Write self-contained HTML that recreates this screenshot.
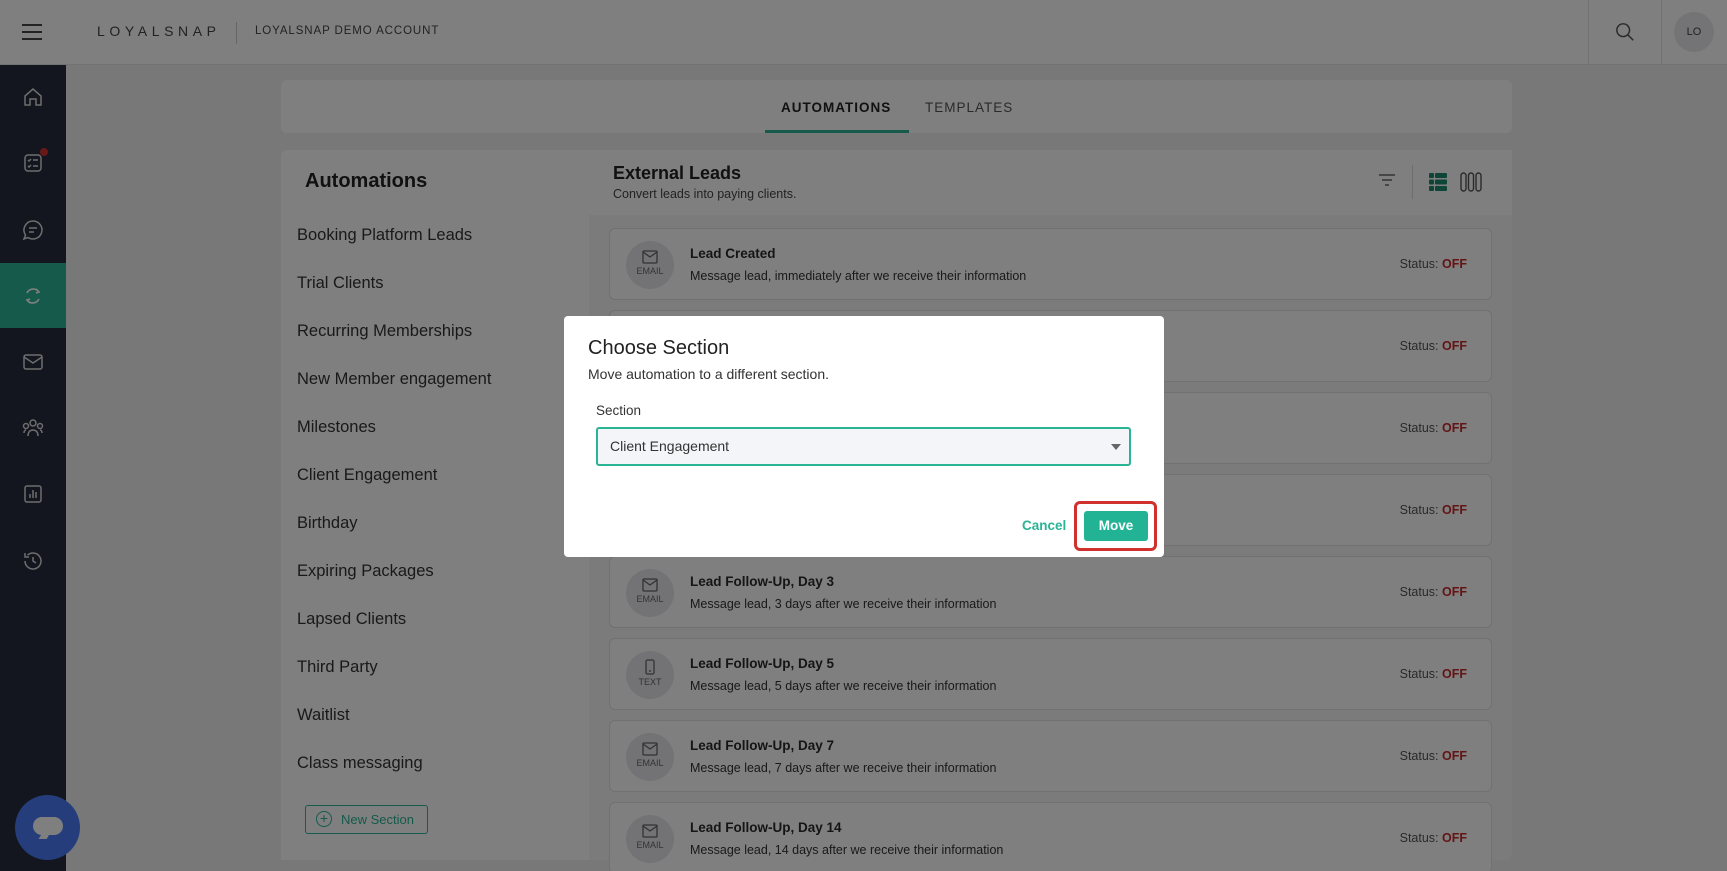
<!DOCTYPE html>
<html><head><meta charset="utf-8"><style>
*{box-sizing:border-box;margin:0;padding:0}
html,body{width:1727px;height:871px;overflow:hidden}
body{background:#f0f0f2;font-family:"Liberation Sans",sans-serif;color:#222;position:relative}
.abs{position:absolute}
.hdr{left:0;top:0;width:1727px;height:65px;background:#fff;border-bottom:1px solid #e4e4e8}
.side{left:0;top:65px;width:66px;height:806px;background:#262a3e}
.ico{position:absolute;left:21px;width:24px;height:24px}
.card{background:#fff;border-radius:6px}
.item{position:absolute;left:297px;font-size:16.5px;color:#333}
.row{position:absolute;left:609px;width:883px;height:72px;background:#fff;border:1px solid #e2e2e6;border-radius:6px}
.circ{position:absolute;left:16px;top:12px;width:48px;height:48px;border-radius:50%;background:#e6e6ea;text-align:center;font-size:9px;color:#666}
.rt{position:absolute;left:80px;top:17px;font-size:13.5px;font-weight:bold;color:#2a2a2a}
.rd{position:absolute;left:80px;top:40px;font-size:12.5px;color:#333}
.st{position:absolute;right:24px;top:28px;font-size:12.5px;color:#555}
.st b{color:#c62828}
.ov{left:0;top:0;width:1727px;height:871px;background:rgba(0,0,0,0.5)}
</style></head><body>
<div class="abs hdr">
 <div class="abs" style="left:22px;top:24px;width:20px;height:2px;background:#444;box-shadow:0 7px 0 #444,0 14px 0 #444"></div>
 <div class="abs" style="left:97px;top:23px;font-size:14px;letter-spacing:4.6px;color:#444">LOYALSNAP</div>
 <div class="abs" style="left:236px;top:22px;width:1px;height:22px;background:#ccc"></div>
 <div class="abs" style="left:255px;top:25px;font-size:11.5px;letter-spacing:0.9px;color:#444">LOYALSNAP DEMO ACCOUNT</div>
 <div class="abs" style="left:1588px;top:0;width:1px;height:65px;background:#e4e4e8"></div>
 <svg class="abs" style="left:1615px;top:22px" width="20" height="20" viewBox="0 0 22 22" fill="none" stroke="#555" stroke-width="1.6"><circle cx="9" cy="9" r="7"/><path d="M14 14l6 6"/></svg>
 <div class="abs" style="left:1661px;top:0;width:1px;height:65px;background:#e4e4e8"></div>
 <div class="abs" style="left:1674px;top:12px;width:40px;height:40px;border-radius:50%;background:#e8e8ec;font-size:11px;color:#444;text-align:center;line-height:40px">LO</div>
</div>
<div class="abs side">
 <div class="abs" style="left:0;top:198px;width:66px;height:65px;background:#2ab496"></div>
 <svg class="ico" style="top:20px" viewBox="0 0 24 24" fill="none" stroke="#ddd" stroke-width="1.5"><path d="M4 11l8-7 8 7v9h-5v-6h-6v6H4z"/></svg>
 <svg class="ico" style="top:86px" viewBox="0 0 24 24" fill="none" stroke="#ddd" stroke-width="1.5"><rect x="4" y="4" width="16" height="16" rx="3"/><path d="M7 9l1 1 2-2M12 9h5M7 15l1 1 2-2M12 15h5"/></svg>
 <div class="abs" style="left:40px;top:83px;width:8px;height:8px;border-radius:50%;background:#d32f2f"></div>
 <svg class="ico" style="top:153px" viewBox="0 0 24 24" fill="none" stroke="#ddd" stroke-width="1.5"><path d="M12 3a9 9 0 1 1-5 16.5L3 21l1.5-4A9 9 0 0 1 12 3z"/><path d="M8 10h8M8 14h5"/></svg>
 <svg class="ico" style="top:219px" viewBox="0 0 24 24" fill="none" stroke="#fff" stroke-width="1.6"><path d="M18 8a7 7 0 0 0-12 1M6 16a7 7 0 0 0 12-1M15 5l3 3-3 1M9 19l-3-3 3-1"/></svg>
 <svg class="ico" style="top:285px" viewBox="0 0 24 24" fill="none" stroke="#ddd" stroke-width="1.5"><rect x="3" y="5" width="18" height="14" rx="2"/><path d="M3 7l9 6 9-6"/></svg>
 <svg class="ico" style="top:351px" viewBox="0 0 24 24" fill="none" stroke="#ddd" stroke-width="1.5"><circle cx="12" cy="7" r="3"/><circle cx="5" cy="10" r="2.5"/><circle cx="19" cy="10" r="2.5"/><path d="M7 20c0-4 2-6 5-6s5 2 5 6M3 17c0-2 1-3 2-3M21 17c0-2-1-3-2-3"/></svg>
 <svg class="ico" style="top:417px" viewBox="0 0 24 24" fill="none" stroke="#ddd" stroke-width="1.5"><rect x="4" y="4" width="16" height="16" rx="2"/><path d="M9 16v-4M12 16V8M15 16v-6"/></svg>
 <svg class="ico" style="top:484px" viewBox="0 0 24 24" fill="none" stroke="#ddd" stroke-width="1.5"><path d="M4 12a8 8 0 1 0 2.5-5.8M4 4v4h4"/><path d="M12 8v4l3 2"/></svg>
</div>
<div class="abs card" style="left:281px;top:80px;width:1231px;height:53px">
 <div class="abs" style="left:500px;top:20px;font-size:13.5px;font-weight:bold;letter-spacing:1px;color:#222">AUTOMATIONS</div>
 <div class="abs" style="left:484px;top:50px;width:144px;height:3px;background:#2ab496"></div>
 <div class="abs" style="left:644px;top:20px;font-size:13.5px;letter-spacing:1px;color:#555">TEMPLATES</div>
</div>
<div class="abs card" style="left:281px;top:150px;width:1231px;height:710px;background:#f7f7f9"></div>
<div class="abs" style="left:281px;top:150px;width:308px;height:710px;background:#fff;border-radius:6px 0 0 0"></div>
<div class="abs" style="left:305px;top:170px;font-size:20px;font-weight:bold;color:#222">Automations</div>
<div class="item" style="top:226px">Booking Platform Leads</div>
<div class="item" style="top:274px">Trial Clients</div>
<div class="item" style="top:322px">Recurring Memberships</div>
<div class="item" style="top:370px">New Member engagement</div>
<div class="item" style="top:418px">Milestones</div>
<div class="item" style="top:466px">Client Engagement</div>
<div class="item" style="top:514px">Birthday</div>
<div class="item" style="top:562px">Expiring Packages</div>
<div class="item" style="top:610px">Lapsed Clients</div>
<div class="item" style="top:658px">Third Party</div>
<div class="item" style="top:706px">Waitlist</div>
<div class="item" style="top:754px">Class messaging</div>
<div class="abs" style="left:305px;top:805px;width:123px;height:29px;border:1px solid #2ab496;border-radius:3px;color:#2ab496;font-size:13px;line-height:27px;padding-left:35px">New Section</div>
<div class="abs" style="left:316px;top:811px;width:16px;height:16px;border:1.5px solid #2ab496;border-radius:50%;color:#2ab496;font-size:14px;line-height:12px;text-align:center">+</div>
<div class="abs" style="left:589px;top:150px;width:923px;height:65px;background:#fff"></div>
<div class="abs" style="left:613px;top:163px;font-size:18px;font-weight:bold;color:#222">External Leads</div>
<div class="abs" style="left:613px;top:187px;font-size:12.5px;color:#444">Convert leads into paying clients.</div>
<svg class="abs" style="left:1377px;top:172px" width="20" height="16" viewBox="0 0 20 16" stroke="#666" stroke-width="1.5"><path d="M2 3h16M5 8h10M8 13h4"/></svg>
<div class="abs" style="left:1412px;top:165px;width:1px;height:34px;background:#ddd"></div>
<svg class="abs" style="left:1429px;top:173px" width="18" height="18" viewBox="0 0 18 18" fill="#1f8a6e"><rect x="0" y="0" width="5" height="5" rx="1"/><rect x="6" y="0" width="12" height="5" rx="1"/><rect x="0" y="6.5" width="5" height="5" rx="1"/><rect x="6" y="6.5" width="12" height="5" rx="1"/><rect x="0" y="13" width="5" height="5" rx="1"/><rect x="6" y="13" width="12" height="5" rx="1"/></svg>
<svg class="abs" style="left:1460px;top:172px" width="22" height="20" viewBox="0 0 22 20" fill="none" stroke="#555" stroke-width="1.4"><rect x="1" y="1" width="5" height="18" rx="2.5"/><rect x="8.5" y="1" width="5" height="18" rx="2.5"/><rect x="16" y="1" width="5" height="18" rx="2.5"/></svg>

<div class="row" style="top:228px"><div class="circ"><svg width="16" height="14" style="margin-top:9px" viewBox="0 0 16 14" fill="none" stroke="#666" stroke-width="1.3"><rect x="1" y="1" width="14" height="12" rx="1"/><path d="M1 2l7 5 7-5"/></svg><div>EMAIL</div></div><div class="rt">Lead Created</div><div class="rd">Message lead, immediately after we receive their information</div><div class="st">Status: <b>OFF</b></div></div>
<div class="row" style="top:310px"><div class="circ"></div><div class="rt">Lead Follow-Up, Day 1</div><div class="rd">Message lead, 1 day after we receive their information</div><div class="st">Status: <b>OFF</b></div></div>
<div class="row" style="top:392px"><div class="circ"></div><div class="rt">Lead Follow-Up, Day 1</div><div class="rd">Message lead, 1 day after we receive their information</div><div class="st">Status: <b>OFF</b></div></div>
<div class="row" style="top:474px"><div class="circ"></div><div class="rt">Lead Follow-Up, Day 2</div><div class="rd">Message lead, 2 days after we receive their information</div><div class="st">Status: <b>OFF</b></div></div>
<div class="row" style="top:556px"><div class="circ"><svg width="16" height="14" style="margin-top:9px" viewBox="0 0 16 14" fill="none" stroke="#666" stroke-width="1.3"><rect x="1" y="1" width="14" height="12" rx="1"/><path d="M1 2l7 5 7-5"/></svg><div>EMAIL</div></div><div class="rt">Lead Follow-Up, Day 3</div><div class="rd">Message lead, 3 days after we receive their information</div><div class="st">Status: <b>OFF</b></div></div>
<div class="row" style="top:638px"><div class="circ"><svg width="12" height="16" style="margin-top:8px" viewBox="0 0 12 16" fill="none" stroke="#666" stroke-width="1.3"><rect x="2" y="1" width="8" height="14" rx="1.5"/><path d="M5 12h2"/></svg><div>TEXT</div></div><div class="rt">Lead Follow-Up, Day 5</div><div class="rd">Message lead, 5 days after we receive their information</div><div class="st">Status: <b>OFF</b></div></div>
<div class="row" style="top:720px"><div class="circ"><svg width="16" height="14" style="margin-top:9px" viewBox="0 0 16 14" fill="none" stroke="#666" stroke-width="1.3"><rect x="1" y="1" width="14" height="12" rx="1"/><path d="M1 2l7 5 7-5"/></svg><div>EMAIL</div></div><div class="rt">Lead Follow-Up, Day 7</div><div class="rd">Message lead, 7 days after we receive their information</div><div class="st">Status: <b>OFF</b></div></div>
<div class="row" style="top:802px"><div class="circ"><svg width="16" height="14" style="margin-top:9px" viewBox="0 0 16 14" fill="none" stroke="#666" stroke-width="1.3"><rect x="1" y="1" width="14" height="12" rx="1"/><path d="M1 2l7 5 7-5"/></svg><div>EMAIL</div></div><div class="rt">Lead Follow-Up, Day 14</div><div class="rd">Message lead, 14 days after we receive their information</div><div class="st">Status: <b>OFF</b></div></div>

<div class="abs" style="left:15px;top:795px;width:65px;height:65px;border-radius:50%;background:#4a7cf7"><div style="position:absolute;left:18px;top:22px;width:30px;height:18px;border-radius:9px;background:#fff"></div><div style="position:absolute;left:26px;top:36px;width:8px;height:8px;background:#fff;transform:skewX(-30deg)"></div></div>

<div class="abs ov"></div>

<div class="abs" style="left:564px;top:316px;width:600px;height:241px;background:#fff;border-radius:4px">
 <div class="abs" style="left:24px;top:21px;font-size:20px;color:#222">Choose Section</div>
 <div class="abs" style="left:24px;top:50px;font-size:14px;color:#333">Move automation to a different section.</div>
 <div class="abs" style="left:32px;top:87px;font-size:13.5px;color:#333">Section</div>
 <div class="abs" style="left:32px;top:111px;width:535px;height:39px;border:2px solid #2ab496;border-radius:3px;background:#f4f5f9;font-size:14px;color:#333;padding-left:12px;line-height:35px">Client Engagement</div>
 <div class="abs" style="left:547px;top:128px;width:0;height:0;border-left:5px solid transparent;border-right:5px solid transparent;border-top:6px solid #666"></div>
 <div class="abs" style="left:458px;top:202px;font-size:13.5px;font-weight:bold;color:#2ab496">Cancel</div>
 <div class="abs" style="left:510px;top:185px;width:83px;height:50px;border:3px solid #d0312d;border-radius:6px"></div>
 <div class="abs" style="left:520px;top:195px;width:64px;height:30px;background:#22b394;border-radius:3px;color:#fff;font-size:13.5px;font-weight:bold;text-align:center;line-height:30px">Move</div>
</div>
</body></html>
